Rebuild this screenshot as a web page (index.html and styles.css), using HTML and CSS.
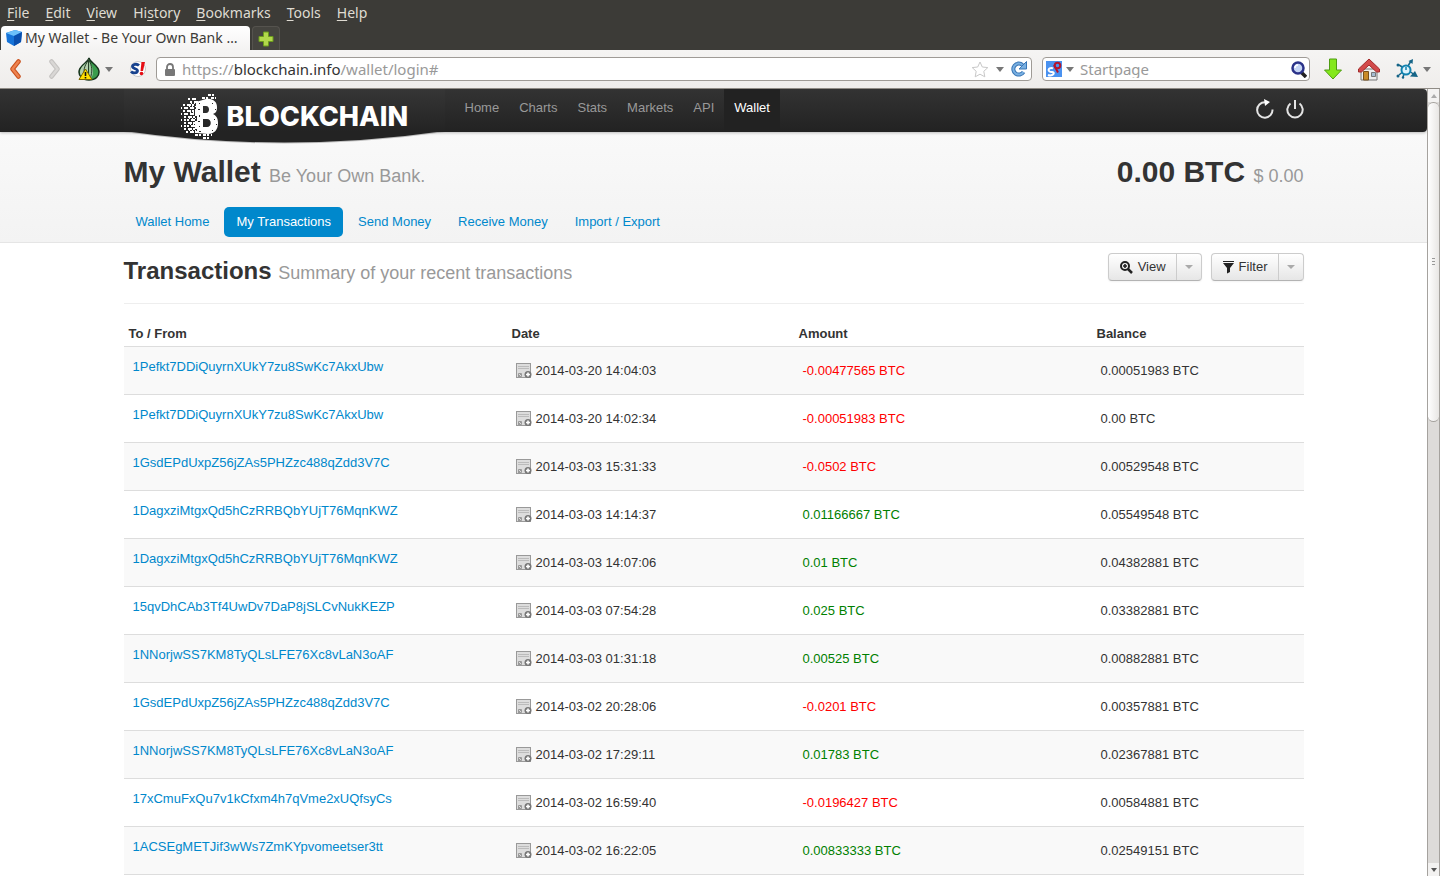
FILE: index.html
```html
<!DOCTYPE html>
<html lang="en">
  <head>
    <meta charset="UTF-8" />
    <meta name="viewport" content="width=device-width, initial-scale=1.0" />
    <title>My Wallet - Be Your Own Bank</title>
    <link rel="stylesheet" href="styles.css">
  </head>
  <body>
    <svg class="defs" width="0" height="0">
      <symbol id="note" viewBox="0 0 16 16">
        <rect x="0.5" y="0.5" width="14" height="14" fill="#ddd" stroke="#999"/>
        <path d="M2 3.5h11M2 5.5h11" stroke="#bbb"/>
        <path d="M2.500 10.500h3v3h-3zM2 14l3-3" fill="none" stroke="#999"/>
        <circle cx="12" cy="11.500" r="3.500" fill="#777"/>
        <path d="M12 9.500v4M10 11.500h4" stroke="#fff" stroke-width="1.600"/>
      </symbol>
    </svg>

    <div class="menubar">
      <button><u>F</u>ile</button>
      <button><u>E</u>dit</button>
      <button><u>V</u>iew</button>
      <button>Hi<u>s</u>tory</button>
      <button><u>B</u>ookmarks</button>
      <button><u>T</u>ools</button>
      <button><u>H</u>elp</button>
    </div>

    <div class="tabs">
      <button class="tab">
        <svg width="16" height="16" viewBox="0 0 16 16">
          <path d="M0 3l9-3 7 2-1 10-7 4-7-4z" fill="#1673d8"/>
          <path d="M0 3l9-3 7 2-8 4z" fill="#6cc0fa"/>
          <path d="M8 6l8-4-1 10-7 4z" fill="#0a4fae"/>
        </svg>
        <span>My Wallet - Be Your Own Bank …</span>
      </button>
      <button class="new-tab" aria-label="New tab">
        <svg width="16" height="16" viewBox="0 0 16 16">
          <path d="M5.5 1h5v4.500h4.500v5h-4.500v4.500h-5v-4.500H1v-5h4.500z" fill="#b2d84b" stroke="#6b9a1d"/>
        </svg>
      </button>
    </div>

    <div class="toolbar">
      <button class="tool back" aria-label="Back">
        <svg width="12" height="20" viewBox="0 0 12 20"><path d="M9.500 2.500L3.500 10l6 7.500" fill="none" stroke="#c9501c" stroke-width="4.500" stroke-linecap="round" stroke-linejoin="round"/><path d="M9.500 2.500L3.500 10l6 7.500" fill="none" stroke="#ee8350" stroke-width="2.500" stroke-linecap="round" stroke-linejoin="round"/></svg>
      </button>
      <button class="tool forward" aria-label="Forward">
        <svg width="12" height="20" viewBox="0 0 12 20"><path d="M2.500 2.500l6 7.500-6 7.500" fill="none" stroke="#c4c2c0" stroke-width="4.500" stroke-linecap="round" stroke-linejoin="round"/><path d="M2.500 2.500l6 7.500-6 7.500" fill="none" stroke="#d9d7d5" stroke-width="2.500" stroke-linecap="round" stroke-linejoin="round"/></svg>
      </button>
      <button class="tool onion" aria-label="Identity">
        <svg width="22" height="24" viewBox="0 0 22 24">
          <path d="M11 1C10 6 1 8 1 15c0 4 3 8 10 8s10-4 10-8c0-7-9-9-10-14z" fill="#3a9c4c" stroke="#16321c" stroke-width="1.500"/>
          <path d="M11 2C10 6 2 9 2 15c0 4 3 7 8 7z" fill="#b3d0ad"/>
          <path d="M11 2c0 5 4 6 4 13 0 3-1 6-4 7z" fill="#9cc79d"/>
          <path d="M10.500 3c-4 6-6 10-3 18M11 3c3 6 4 11 1 19M10.500 3v18" fill="none" stroke="#26402a"/>
          <path d="M7.500 12L14 22.500H1z" fill="#ffe000" stroke="#7a6500"/>
          <path d="M7.500 15v4M7.500 20v1.500" stroke="#111" stroke-width="1.600"/>
        </svg>
        <svg width="8" height="5" viewBox="0 0 8 5"><path d="M0 0h8L4 5z" fill="#777"/></svg>
      </button>
      <button class="tool noscript" aria-label="Scripts">
        <svg width="16" height="16" viewBox="0 0 16 16">
          <circle cx="8" cy="8" r="7.500" fill="#fff" stroke="#c8c8c8"/>
          <path d="M9 4.500C7 2.500 2.500 3 2.500 5.500S8 7.500 7.500 10 3 12.500 1 10.500" fill="none" stroke="#17428e" stroke-width="2.800"/>
          <path d="M11.500 1h3.500l-2 9h-2.500z" fill="#e60d14"/><circle cx="11.500" cy="12.500" r="1.800" fill="#e60d14"/>
        </svg>
      </button>
      <div class="url-box">
        <svg width="10" height="13" viewBox="0 0 10 13"><rect y="6" width="10" height="7" rx="1" fill="#777"/><path d="M2 7V4a3 3 0 0 1 6 0v3" fill="none" stroke="#777" stroke-width="1.800"/></svg>
        <div class="url" role="textbox" aria-label="Address" contenteditable="true">https://<b>blockchain.info</b>/wallet/login#</div>
        <svg width="18" height="17" viewBox="0 0 18 17"><path d="M9 1l2.300 5 5.500.6-4 3.700 1 5.500L9 13.200 4.200 15.800l1-5.500-4-3.700L6.700 6z" fill="#fff" stroke="#c8c8c8"/></svg>
        <svg class="arrow" width="8" height="5" viewBox="0 0 8 5"><path d="M0 0h8L4 5z" fill="#777"/></svg>
        <svg width="16" height="16" viewBox="0 0 16 16"><path d="M12.500 11A5.500 5.500 0 1 1 11.500 4" fill="none" stroke="#3a76b5" stroke-width="4"/><path d="M12.500 11A5.500 5.500 0 1 1 11.500 4" fill="none" stroke="#79b0e2" stroke-width="2"/><path d="M15.500 0.500v7.500h-7.500z" fill="#79b0e2" stroke="#3a76b5"/></svg>
      </div>
      <div class="search-box">
        <svg width="16" height="16" viewBox="0 0 16 16">
          <rect width="16" height="16" fill="#4a92f0"/>
          <path d="M7 7.500C5 6 1.500 8 3 10s3.500 0 4.500 1.500-2 4-5.500 2.500" fill="none" stroke="#fff" stroke-width="2"/>
          <path d="M8 4l4 7.500" stroke="#b3142d" stroke-width="2"/><circle cx="11.500" cy="4.500" r="2.800" fill="none" stroke="#b3142d" stroke-width="2"/>
        </svg>
        <svg class="arrow" width="8" height="5" viewBox="0 0 8 5"><path d="M0 0h8L4 5z" fill="#777"/></svg>
        <input type="text" placeholder="Startpage" aria-label="Search" />
        <svg width="16" height="17" viewBox="0 0 16 17"><path d="M10 11l5 5" stroke="#222" stroke-width="3.500"/><circle cx="7" cy="7" r="5.500" fill="#c5d5f5" stroke="#2b3389" stroke-width="2.500"/><path d="M4 7a3 3 0 0 1 3-3" fill="none" stroke="#fff" stroke-width="1.500"/></svg>
      </div>
      <button class="tool download" aria-label="Downloads">
        <svg width="18" height="22" viewBox="0 0 18 22"><path d="M5.500 1h7v11h5L9 21 .5 12h5z" fill="#84e81c" stroke="#4f9d11"/></svg>
      </button>
      <button class="tool home" aria-label="Home page">
        <svg width="22" height="23" viewBox="0 0 22 23">
          <path d="M3 11h16v11H3z" fill="#eee" stroke="#777"/><path d="M5.500 13.500h5V22h-5z" fill="#c98a28" stroke="#79501a"/><path d="M13.500 14.500h4v4h-4z" fill="#a4bcd2" stroke="#777"/>
          <path d="M11 1L0.500 11v3h3L11 7l7.500 7h3v-3z" fill="#d24a4a" stroke="#a32a2a"/>
        </svg>
      </button>
      <button class="tool network" aria-label="Trackers">
        <svg width="22" height="20" viewBox="0 0 22 20">
          <path d="M3 16l6-5M3 6l5 3M12 7l3-5M8 14l-1 5M13 12l6 4" stroke="#156487" stroke-width="1.500"/>
          <circle cx="10" cy="11" r="4.500" fill="#ddf2fb" stroke="#1283b0" stroke-width="2"/><path d="M10 8v3" stroke="#1283b0" stroke-width="1.500"/>
          <circle cx="2" cy="17" r="1.500" fill="#156487"/><circle cx="2" cy="6" r="1.500" fill="#156487"/><path d="M12.500 2L17 0l-.5 5z" fill="#156487"/><circle cx="7" cy="18.500" r="1.200" fill="#156487"/>
          <path d="M19 12l3 6-8-.5z" fill="#156487"/>
        </svg>
        <svg width="8" height="5" viewBox="0 0 8 5"><path d="M0 0h8L4 5z" fill="#777"/></svg>
      </button>
    </div>

    <div class="window">
      <main class="page">
        <div class="navbar">
          <div class="container nav-row">
            <a class="brand" href="#">
              <svg class="brand-arc" width="321" height="14" viewBox="0 0 321 14"><path d="M0 1Q160 24 321 1z" fill="#999" opacity="0.6"/><path d="M0 0Q160 23 321 0z" fill="#232323"/></svg>
              <svg class="brand-mark" width="38" height="46" viewBox="0 0 38 46">
                <path fill="#fff" fill-rule="evenodd" d="M15 9l10-3c7-1 11 3 11 8 0 4-1 6-4 7 4 2 5 5 5 9 0 7-4 11-10 11l-11-1v-4h-2v-8h2v-5h-2v-7h1zM22 13v7h3c4 0 4-7 0-7zM22 26v8h4c5 0 5-8 0-8z"/>
                <g fill="none" stroke="#fff" stroke-width="2">
                  <path stroke-dasharray="3 1 2 3" d="M27 2h6M21 5h14"/>
                  <path stroke-dasharray="2 2 4 1" d="M7 6h8M9 9h14M2 12h12M5 15h9M2 18h12M5 21h10M3 24h12M6 27h9M3 30h12M6 33h9M3 36h13M5 39h14"/>
                  <path stroke-dasharray="1 2 2 3" d="M0 15h5M0 21h5M0 27h5M0 33h5"/>
                  <path stroke-dasharray="3 1 2 2" d="M14 42h17M22 45h8"/>
                </g>
                <path stroke="#fff" stroke-dasharray="1 2" d="M10 10.500h6M8 13.500h7M9 19.500h7M8 25.500h7M9 31.500h7M8 37.500h8"/>
                <path fill="#2a2a2a" d="M18 10h1v1h-1zM17 16h2v1h-2zM18 22h1v2h-1zM17 28h2v1h-2zM18 33h1v1h-1zM18 38h2v1h-2zM31 10h1v1h-1zM34 16h1v1h-1zM33 26h1v1h-1zM35 31h1v1h-1zM31 37h1v1h-1z"/>
              </svg>
              <span>BLOCKCHAIN</span>
            </a>
            <nav>
              <a href="#">Home</a>
              <a href="#">Charts</a>
              <a href="#">Stats</a>
              <a href="#">Markets</a>
              <a href="#">API</a>
              <a class="active" href="#">Wallet</a>
            </nav>
            <div class="session">
              <button aria-label="Refresh">
                <svg width="18" height="20" viewBox="0 0 18 20"><path d="M16.500 10.500A7.700 7.700 0 1 1 9 3.300" fill="none" stroke="#e4e4e4" stroke-width="2"/><path d="M8 0l6 3-5 4z" fill="#fff"/></svg>
              </button>
              <button aria-label="Logout">
                <svg width="18" height="20" viewBox="0 0 18 20"><path d="M4.500 4.500a7.700 7.700 0 1 0 9 0M9 1v9" fill="none" stroke="#e4e4e4" stroke-width="2"/></svg>
              </button>
            </div>
          </div>
        </div>

        <div class="subhead">
          <div class="container">
            <div class="title-row">
              <h1>My Wallet <small>Be Your Own Bank.</small></h1>
              <h1>0.00 BTC <small>$ 0.00</small></h1>
            </div>
            <nav class="pills">
              <a href="#">Wallet Home</a>
              <a class="active" href="#">My Transactions</a>
              <a href="#">Send Money</a>
              <a href="#">Receive Money</a>
              <a href="#">Import / Export</a>
            </nav>
          </div>
        </div>

        <div class="container">
          <div class="page-header">
            <h2>Transactions <small>Summary of your recent transactions</small></h2>
            <div class="actions">
              <div class="btn-group">
                <button>
                  <svg width="13" height="13" viewBox="0 0 13 13"><circle cx="5" cy="5" r="4" fill="none" stroke="#222" stroke-width="2"/><path d="M8 8l4 4" stroke="#222" stroke-width="2.500"/><path d="M3 5h4M5 3v4" stroke="#222" stroke-width="1.600"/></svg>
                  View
                </button>
                <button class="toggle" aria-label="View options"><svg width="8" height="4" viewBox="0 0 8 4"><path d="M0 0h8L4 4z" fill="#aaa"/></svg></button>
              </div>
              <div class="btn-group">
                <button>
                  <svg width="11" height="13" viewBox="0 0 11 13"><path d="M0 0h11v1H0zM0 2h11L7 7v4l-3 1.500V7z" fill="#222"/></svg>
                  Filter
                </button>
                <button class="toggle" aria-label="Filter options"><svg width="8" height="4" viewBox="0 0 8 4"><path d="M0 0h8L4 4z" fill="#aaa"/></svg></button>
              </div>
            </div>
          </div>

          <table>
            <thead>
              <tr><th class="col-address">To / From</th><th class="col-date">Date</th><th class="col-amount">Amount</th><th>Balance</th></tr>
            </thead>
            <tbody>
              <tr><td><a href="#">1Pefkt7DDiQuyrnXUkY7zu8SwKc7AkxUbw</a></td><td><svg><use href="#note"/></svg>2014-03-20 14:04:03</td><td class="out">-0.00477565 BTC</td><td>0.00051983 BTC</td></tr>
              <tr><td><a href="#">1Pefkt7DDiQuyrnXUkY7zu8SwKc7AkxUbw</a></td><td><svg><use href="#note"/></svg>2014-03-20 14:02:34</td><td class="out">-0.00051983 BTC</td><td>0.00 BTC</td></tr>
              <tr><td><a href="#">1GsdEPdUxpZ56jZAs5PHZzc488qZdd3V7C</a></td><td><svg><use href="#note"/></svg>2014-03-03 15:31:33</td><td class="out">-0.0502 BTC</td><td>0.00529548 BTC</td></tr>
              <tr><td><a href="#">1DagxziMtgxQd5hCzRRBQbYUjT76MqnKWZ</a></td><td><svg><use href="#note"/></svg>2014-03-03 14:14:37</td><td class="in">0.01166667 BTC</td><td>0.05549548 BTC</td></tr>
              <tr><td><a href="#">1DagxziMtgxQd5hCzRRBQbYUjT76MqnKWZ</a></td><td><svg><use href="#note"/></svg>2014-03-03 14:07:06</td><td class="in">0.01 BTC</td><td>0.04382881 BTC</td></tr>
              <tr><td><a href="#">15qvDhCAb3Tf4UwDv7DaP8jSLCvNukKEZP</a></td><td><svg><use href="#note"/></svg>2014-03-03 07:54:28</td><td class="in">0.025 BTC</td><td>0.03382881 BTC</td></tr>
              <tr><td><a href="#">1NNorjwSS7KM8TyQLsLFE76Xc8vLaN3oAF</a></td><td><svg><use href="#note"/></svg>2014-03-03 01:31:18</td><td class="in">0.00525 BTC</td><td>0.00882881 BTC</td></tr>
              <tr><td><a href="#">1GsdEPdUxpZ56jZAs5PHZzc488qZdd3V7C</a></td><td><svg><use href="#note"/></svg>2014-03-02 20:28:06</td><td class="out">-0.0201 BTC</td><td>0.00357881 BTC</td></tr>
              <tr><td><a href="#">1NNorjwSS7KM8TyQLsLFE76Xc8vLaN3oAF</a></td><td><svg><use href="#note"/></svg>2014-03-02 17:29:11</td><td class="in">0.01783 BTC</td><td>0.02367881 BTC</td></tr>
              <tr><td><a href="#">17xCmuFxQu7v1kCfxm4h7qVme2xUQfsyCs</a></td><td><svg><use href="#note"/></svg>2014-03-02 16:59:40</td><td class="out">-0.0196427 BTC</td><td>0.00584881 BTC</td></tr>
              <tr><td><a href="#">1ACSEgMETJif3wWs7ZmKYpvomeetser3tt</a></td><td><svg><use href="#note"/></svg>2014-03-02 16:22:05</td><td class="in">0.00833333 BTC</td><td>0.02549151 BTC</td></tr>
            </tbody>
          </table>
        </div>
      </main>

      <div class="scrollbar">
        <button aria-label="Scroll up"><svg width="6" height="4" viewBox="0 0 6 4"><path d="M3 0l3 4H0z" fill="#aaa"/></svg></button>
        <div class="track">
          <div class="thumb"><i></i><i></i><i></i></div>
        </div>
        <button aria-label="Scroll down"><svg width="6" height="4" viewBox="0 0 6 4"><path d="M0 0h6L3 4z" fill="#555"/></svg></button>
      </div>
    </div>
  </body>
</html>
```

FILE: styles.css
```css
* {
  box-sizing: border-box;
}
body {
  margin: 0;
  height: 100vh;
  display: flex;
  flex-direction: column;
  overflow: hidden;
  font-family: "Liberation Sans", Arial, sans-serif;
  font-size: 13px;
  line-height: 18px;
  color: #333;
  background: #fff;
}
button {
  border: 0;
  padding: 0;
  background: none;
  font: inherit;
  color: inherit;
}
a {
  color: #0088cc;
  text-decoration: none;
}
svg {
  flex: none;
}
.defs {
  position: absolute;
}

/* browser */
.menubar,
.tabs,
.toolbar {
  flex: none;
  display: flex;
  font-family: "Noto Sans", sans-serif;
  font-size: 14px;
}
.menubar {
  height: 26px;
  padding-left: 7px;
  gap: 16px;
  align-items: center;
  background: #3c3b37;
  color: #dfdbd2;
}
.menubar u {
  text-underline-offset: 2px;
}
.tabs {
  height: 24px;
  padding-left: 1px;
  gap: 2px;
  background: #3c3b37;
}
.tab {
  width: 249px;
  display: flex;
  align-items: center;
  gap: 3px;
  padding: 0 5px;
  border-radius: 4px 4px 0 0;
  background: linear-gradient(#fff, #f4f3f2);
  color: #3c3b37;
  white-space: nowrap;
}
.new-tab {
  width: 28px;
  display: flex;
  align-items: center;
  justify-content: center;
  border: 1px solid #55534e;
  border-bottom: 0;
  border-radius: 4px 4px 0 0;
  background: #45443f;
}
.toolbar {
  height: 39px;
  align-items: center;
  padding: 0 9px;
  border-bottom: 1px solid #8f8b85;
  background: linear-gradient(#f5f4f3, #efedeb);
  font-size: 15px;
}
.tool {
  display: flex;
  align-items: center;
  gap: 5px;
}
.forward {
  margin-left: 28px;
}
.onion {
  margin-left: 17px;
}
.noscript {
  margin: 0 10px 0 17px;
}
.url-box,
.search-box {
  height: 24px;
  display: flex;
  align-items: center;
  border: 1px solid #9f9b96;
  border-radius: 4px;
  background: #fff;
}
.url-box {
  flex: 1;
  padding: 0 4px 0 8px;
  gap: 7px;
}
.url {
  flex: 1;
  color: #999;
  white-space: nowrap;
}
.url b {
  font-weight: normal;
  color: #333;
}
.search-box {
  width: 268px;
  margin-left: 10px;
  padding: 0 2px 0 3px;
  gap: 4px;
}
.search-box input {
  flex: 1;
  min-width: 0;
  border: 0;
  padding: 0 2px;
  outline: 0;
  background: none;
  font: inherit;
}
.search-box input::placeholder {
  color: #999;
}
.download {
  margin-left: 14px;
}
.home,
.network {
  margin-left: 16px;
}

/* page */
.window {
  flex: 1;
  min-height: 0;
  display: flex;
}
.page {
  flex: 1;
  overflow: hidden;
}
.container {
  max-width: 1180px;
  margin: 0 auto;
}
.navbar {
  position: relative;
  height: 43px;
  border-radius: 0 4px 4px 0;
  background: linear-gradient(#333, #222);
  box-shadow: 0 1px 3px rgba(0, 0, 0, 0.25);
}
.nav-row {
  display: flex;
  height: 43px;
}
.brand {
  position: relative;
  width: 321px;
  padding-left: 57px;
  display: flex;
  align-items: flex-start;
  gap: 8px;
  background: linear-gradient(#363636, #232323);
  color: #fff;
  font-family: Inter, sans-serif;
  font-size: 27px;
  font-weight: 800;
  line-height: 56px;
}
.brand-arc {
  position: absolute;
  left: 0;
  top: 42px;
}
.brand-mark {
  position: relative;
  margin-top: 4px;
}
.nav-row nav {
  display: flex;
  margin-left: 10px;
}
.nav-row nav a {
  padding: 9px 10px 12px;
  line-height: 19px;
  color: #999;
}
.nav-row nav .active {
  color: #fff;
  background: #222;
}
.session {
  margin-left: auto;
  padding-bottom: 4px;
  display: flex;
  gap: 12px;
}
.session svg {
  display: block;
}
.subhead {
  padding: 22px 0 5px;
  border-bottom: 1px solid #e5e5e5;
  background: linear-gradient(#f9f9f9, #f3f3f3);
}
.title-row {
  display: flex;
  justify-content: space-between;
}
h1,
h2 {
  margin: 0;
  line-height: 36px;
}
h1 {
  font-size: 30px;
}
h2 {
  font-size: 24px;
}
small {
  font-size: 18px;
  font-weight: normal;
  color: #999;
}
.pills {
  display: flex;
  gap: 3px;
  margin-top: 13px;
}
.pills a {
  padding: 8px 12px;
  border-radius: 5px;
  line-height: 14px;
}
.pills .active {
  background: #0088cc;
  color: #fff;
}
.page-header {
  display: flex;
  justify-content: space-between;
  padding: 10px 0 12px;
  border-bottom: 1px solid #eee;
}
.page-header h2 {
  line-height: 36px;
}
.actions {
  display: flex;
  gap: 9px;
}
.btn-group {
  display: flex;
  height: 28px;
  border: 1px solid #ccc;
  border-bottom-color: #b3b3b3;
  border-radius: 4px;
  background: linear-gradient(#fff, #e6e6e6);
  box-shadow: 0 1px 2px rgba(0, 0, 0, 0.05);
}
.btn-group button {
  display: flex;
  align-items: center;
  gap: 5px;
  padding: 0 10px 0 11px;
}
.btn-group .toggle {
  padding: 0 8px;
  border-left: 1px solid #ccc;
}
table {
  width: 100%;
  margin-top: 16px;
  table-layout: fixed;
  border-spacing: 0;
  border-bottom: 1px solid #ddd;
}
th {
  padding: 5px 5px 3px;
  text-align: left;
}
.col-address {
  width: 383px;
}
.col-date {
  width: 287px;
}
.col-amount {
  width: 298px;
}
td {
  height: 48px;
  padding: 0 9px;
  border-top: 1px solid #ddd;
}
td:first-child {
  padding-bottom: 8px;
}
tbody tr:nth-child(odd) {
  background: #f9f9f9;
}
td svg {
  width: 16px;
  height: 16px;
  margin-right: 4px;
  vertical-align: -4px;
}
.out {
  color: #ff0000;
}
.in {
  color: #008000;
}

/* scrollbar */
.scrollbar {
  width: 13px;
  display: flex;
  flex-direction: column;
  border-left: 1px solid #a5a29e;
  border-right: 1px solid #a5a29e;
  background: #dddbd9;
}
.scrollbar button {
  height: 13px;
  display: flex;
  align-items: center;
  justify-content: center;
  background: #f3f2f1;
}
.track {
  flex: 1;
}
.thumb {
  height: 42%;
  display: flex;
  flex-direction: column;
  align-items: center;
  justify-content: center;
  gap: 2px;
  border: 1px solid #a5a29e;
  border-width: 1px 0;
  border-radius: 6px;
  background: linear-gradient(90deg, #fff, #e8e6e4);
}
.thumb i {
  width: 3px;
  height: 1px;
  background: #999;
}
```
